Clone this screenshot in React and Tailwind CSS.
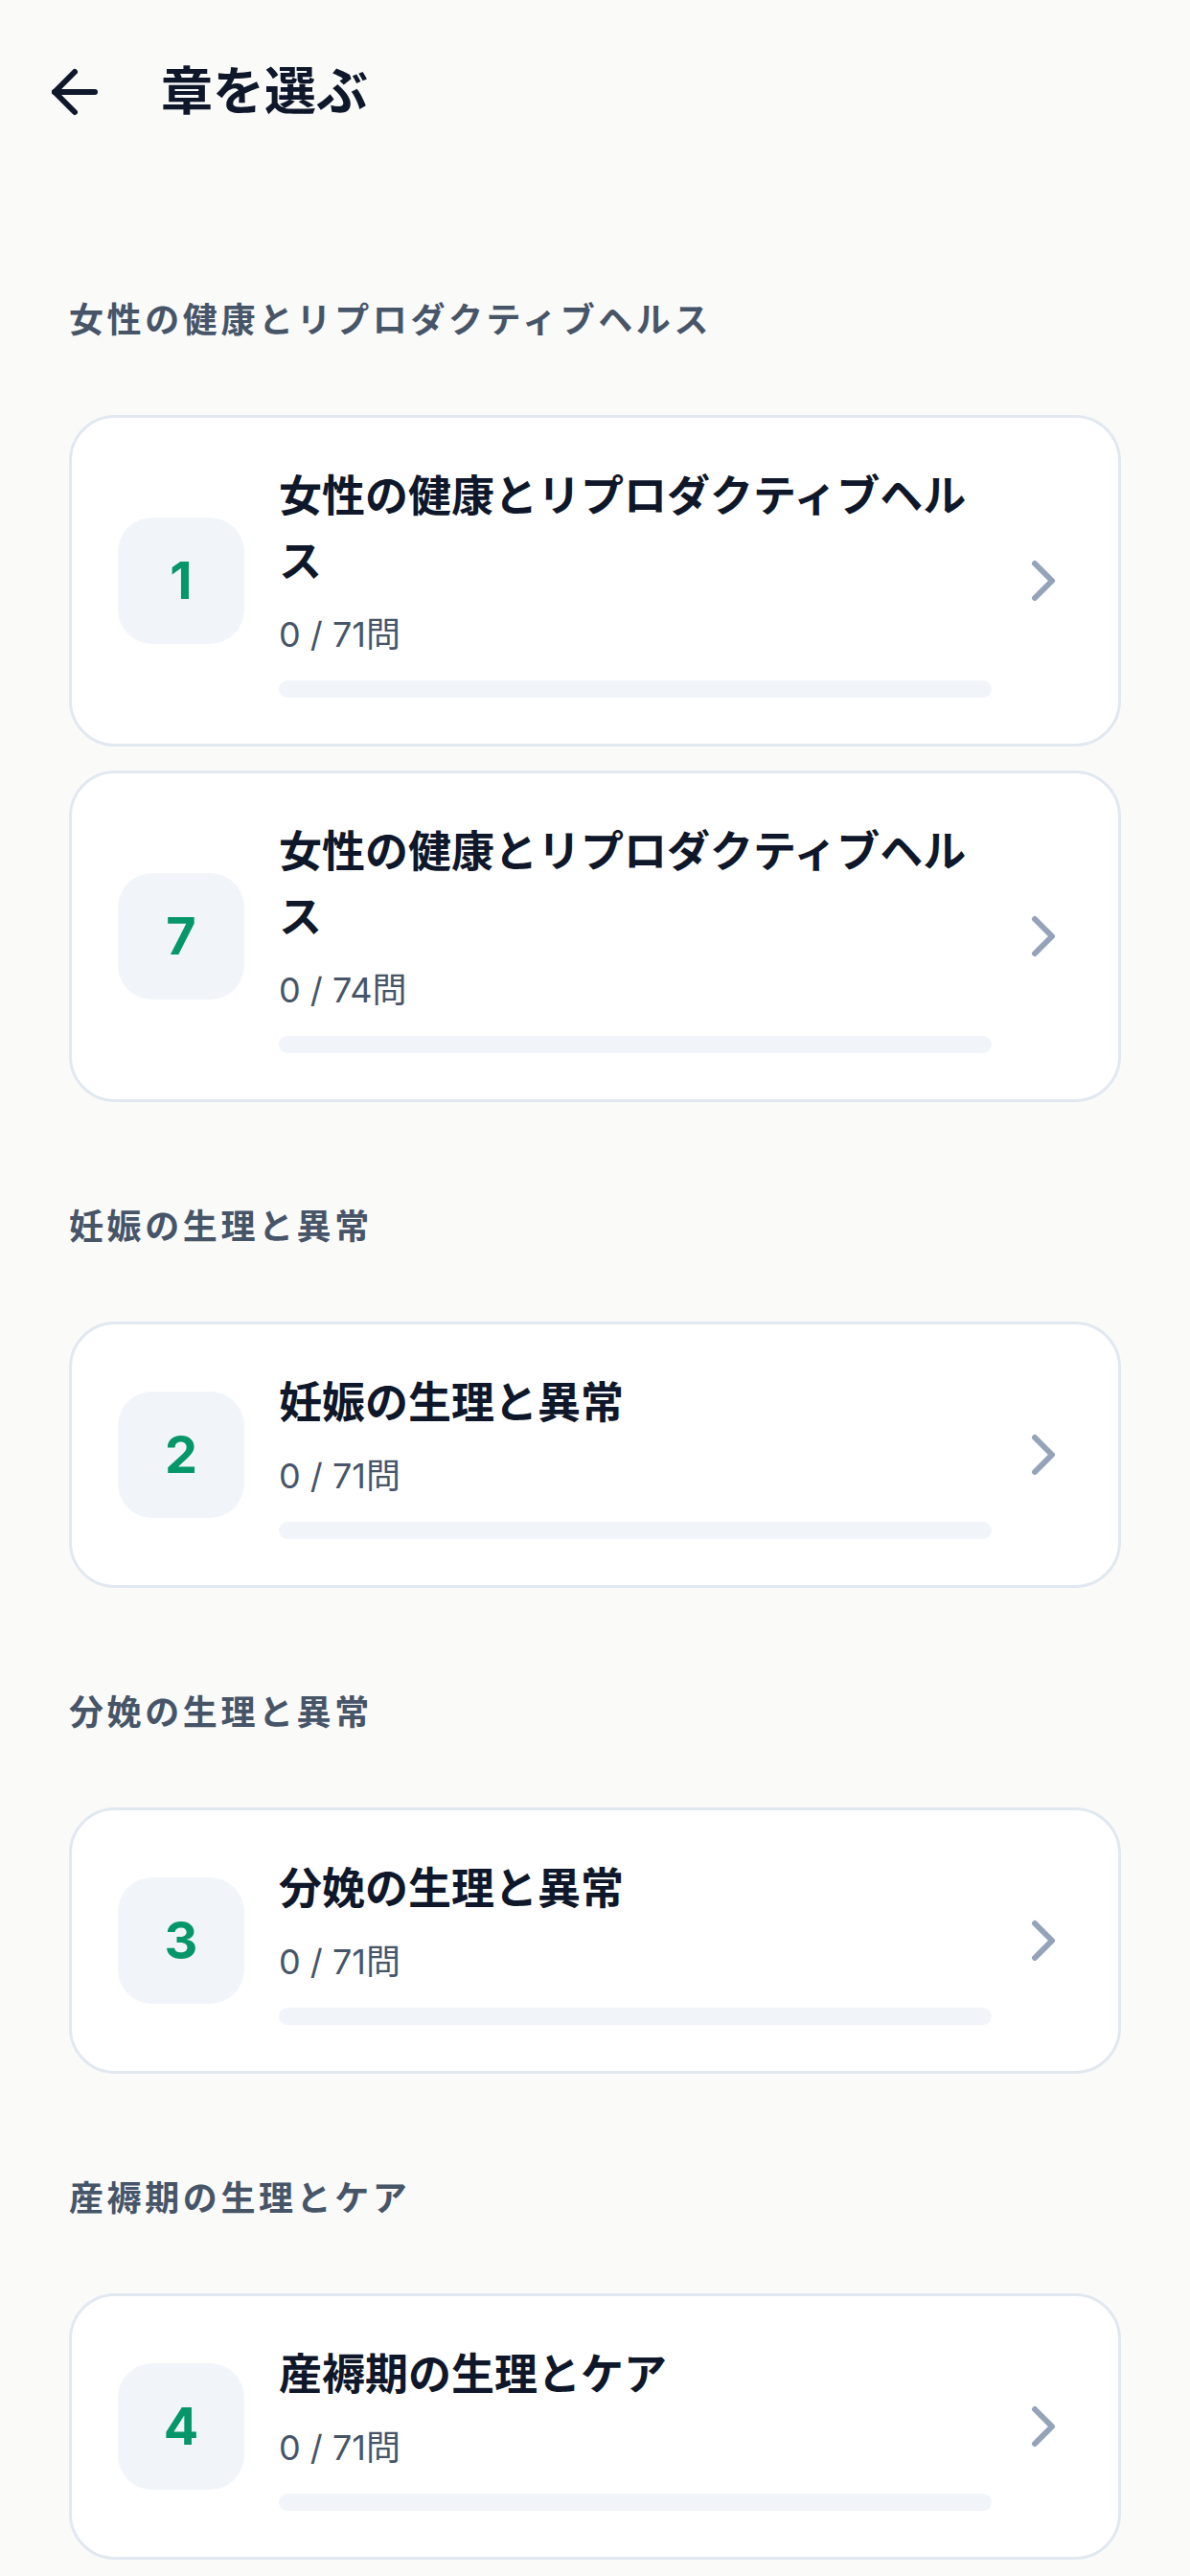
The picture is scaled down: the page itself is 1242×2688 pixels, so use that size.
import { ArrowLeft, ChevronRight } from "lucide-react";

const sections = [
  {
    label: "女性の健康とリプロダクティブヘルス",
    chapters: [
      { no: 1, title: "女性の健康とリプロダクティブヘルス", done: 0, total: 71 },
      { no: 7, title: "女性の健康とリプロダクティブヘルス", done: 0, total: 74 },
    ],
  },
  {
    label: "妊娠の生理と異常",
    chapters: [{ no: 2, title: "妊娠の生理と異常", done: 0, total: 71 }],
  },
  {
    label: "分娩の生理と異常",
    chapters: [{ no: 3, title: "分娩の生理と異常", done: 0, total: 71 }],
  },
  {
    label: "産褥期の生理とケア",
    chapters: [{ no: 4, title: "産褥期の生理とケア", done: 0, total: 71 }],
  },
];

const ChapterCard = ({ chapter }) => {
  const pct = chapter.total ? (chapter.done / chapter.total) * 100 : 0;

  return (
    <button className="flex w-full items-center rounded-[48px] border-[3px] border-[#e2e8f0] bg-white py-[48px] pl-[48px] pr-[42px] text-left">
      <div className="flex h-[132px] w-[132px] shrink-0 items-center justify-center rounded-[36px] bg-[#f1f5f9]">
        <span className="text-[54px] font-bold leading-none text-[#059669]">
          {chapter.no}
        </span>
      </div>
      <div className="ml-[36px] min-w-0 flex-1">
        <h3 className="text-[45px] font-bold leading-[68px] text-[#0f172a]">
          {chapter.title}
        </h3>
        <p className="mt-[15px] text-[36px] leading-[54px] text-[#475569]">
          {chapter.done} / {chapter.total}問
        </p>
        <div className="mt-[21px] h-[18px] w-full overflow-hidden rounded-full bg-[#f1f5f9]">
          <div
            className="h-full rounded-full bg-[#059669]"
            style={{ width: `${pct}%` }}
          />
        </div>
      </div>
      <ChevronRight
        className="ml-[18px] h-[72px] w-[72px] shrink-0 text-[#94a3b8]"
        strokeWidth={2}
      />
    </button>
  );
};

export default function App() {
  return (
    <div className="h-screen overflow-y-auto bg-[#fafaf9] font-[Inter,'Noto_Sans_CJK_JP',sans-serif]">
      <header className="flex items-center px-[42px] pt-[60px]">
        <button className="h-[72px] w-[72px] shrink-0 text-[#0f172a]">
          <ArrowLeft className="h-[72px] w-[72px]" strokeWidth={2} />
        </button>
        <h1 className="ml-[54px] text-[54px] font-bold leading-[72px] text-[#0f172a]">
          章を選ぶ
        </h1>
      </header>

      <main className="mt-[178px] flex flex-col gap-[106px] px-[72px]">
        {sections.map((section) => (
          <section key={section.label}>
            <h2 className="mb-[75px] text-[36px] font-bold leading-[48px] tracking-[0.1em] text-[#475569]">
              {section.label}
            </h2>
            <div className="flex flex-col gap-[25px]">
              {section.chapters.map((c) => (
                <ChapterCard key={c.no} chapter={c} />
              ))}
            </div>
          </section>
        ))}
      </main>
    </div>
  );
}
